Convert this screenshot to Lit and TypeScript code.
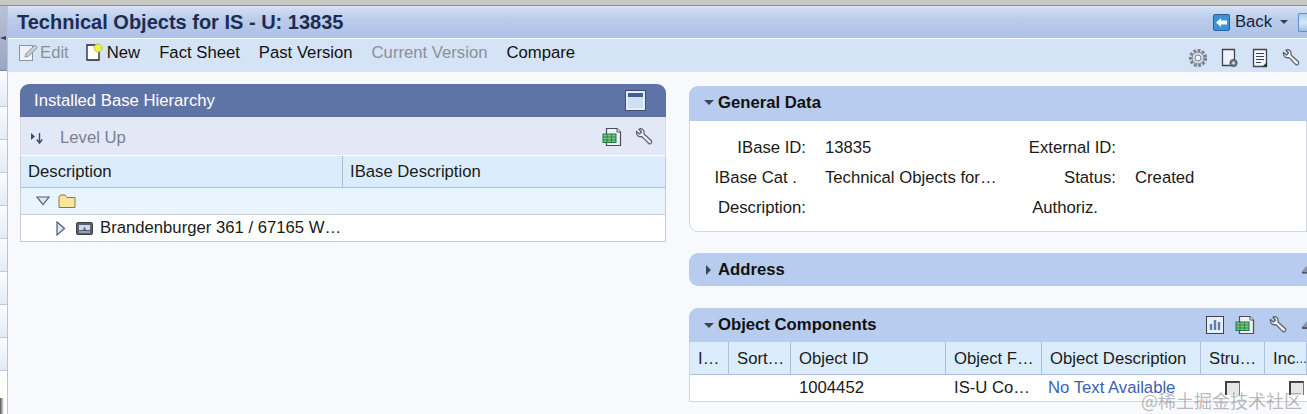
import { LitElement, html, css } from "lit";
import { customElement } from "lit/decorators.js";

const gear = html`<svg width="20" height="20" viewBox="0 0 20 20">
  <circle cx="10" cy="10" r="7.6" fill="none" stroke="#7a818d" stroke-width="3" stroke-dasharray="2.8 1.6"></circle>
  <circle cx="10" cy="10" r="6" fill="#d4dce8" stroke="#7a818d" stroke-width="1"></circle>
  <circle cx="10" cy="10" r="3" fill="#eef2f8" stroke="#7a818d" stroke-width="1"></circle>
</svg>`;

const wrench = html`<svg width="20" height="20" viewBox="0 0 20 20">
  <path d="M2.5 4.5 L5.5 7 L7.5 5 L5 2.2 C7.5 1 10.2 2.6 10 5.6 L10 7 L17.2 13.4 C18.6 15 16.8 17.8 14.6 16.4 L8 9.6 C5 10.4 1.8 8 2.5 4.5 Z" fill="#f4f6fa" stroke="#5a6370" stroke-width="1.3" stroke-linejoin="round"></path>
</svg>`;

const sheet = html`<svg width="22" height="20" viewBox="0 0 22 20">
  <path d="M4.5 1.5 H15 L18.5 5 V18.5 H4.5 Z" fill="#eef1f5" stroke="#4a4f57" stroke-width="1.2"></path>
  <path d="M15 1.5 V5 H18.5" fill="#fff" stroke="#4a4f57" stroke-width="1"></path>
  <rect x="1" y="7" width="13" height="8.5" fill="#7fc57a" stroke="#1d7a4a" stroke-width="1"></rect>
  <path d="M1 10 H14 M1 13 H14 M5 7 V15.5 M9.5 7 V15.5" stroke="#1d7a4a" stroke-width=".8"></path>
</svg>`;

const grayBox = html`<span class="check"></span>`;

@customElement("app-root")
export class AppRoot extends LitElement {
  static styles = css`
    :host {
      display: block;
      width: 1307px;
      height: 414px;
      overflow: hidden;
      position: relative;
      font-family: "Liberation Sans", Arial, sans-serif;
      font-size: 16.7px;
      color: #1a1a1a;
      background: #f7f9fd;
    }
    .top {
      height: 5px;
      background: #c8c8c4;
      border-bottom: 1px solid #8f8f8f;
    }
    .shell {
      display: flex;
      height: 408px;
    }
    .side {
      width: 7px;
      flex: none;
      border-right: 1px solid #bfc3cf;
      display: flex;
      flex-direction: column;
      position: relative;
      background: #fff;
    }
    .side .handle {
      height: 64px;
      background: linear-gradient(#b9c3d6, #9aa5c4);
      border-bottom: 1px solid #7f8796;
    }
    .side .tab {
      height: 32px;
      background: linear-gradient(#fbfcfe, #e4ebf6);
      border-bottom: 1px solid #c3c8d4;
    }
    .side .tab.first {
      height: 35px;
    }
    .side .pin {
      position: absolute;
      top: 30px;
      left: 0;
      width: 6px;
      height: 4px;
      background: #33425f;
      clip-path: polygon(0 50%, 100% 0, 100% 100%);
    }
    .side .blob {
      position: absolute;
      left: 0;
      bottom: 0;
      width: 4px;
      height: 16px;
      background: linear-gradient(90deg, #555, #fff);
    }
    .main {
      flex: 1;
      min-width: 0;
    }
    .title {
      height: 33px;
      box-sizing: border-box;
      display: flex;
      align-items: center;
      padding: 0 0 0 9px;
      background: linear-gradient(#d4e0f5, #b9cbea 45%, #aec2e6);
      border-bottom: 1px solid #fff;
    }
    .title h1 {
      margin: 0;
      font-size: 20px;
      font-weight: bold;
      color: #1c2d52;
      white-space: nowrap;
    }
    .back {
      margin-left: auto;
      display: flex;
      align-items: center;
      gap: 5px;
      color: #14233f;
      white-space: nowrap;
    }
    .back .caret {
      width: 0;
      height: 0;
      border: 4px solid transparent;
      border-top: 4px solid #37404f;
      border-bottom: 0;
      margin: 0 5px 0 3px;
    }
    .back .next {
      width: 8px;
      height: 17px;
      border-radius: 2px 0 0 2px;
      border: 1px solid #5f93c8;
      border-right: 0;
      background: linear-gradient(#a9cfee, #d8e8f7 50%, #9cc3e8);
    }
    .tools {
      height: 33px;
      box-sizing: border-box;
      display: flex;
      align-items: center;
      padding: 0 0 6px 11px;
      background: #d5e3f7;
      white-space: nowrap;
    }
    .tools .item {
      display: flex;
      align-items: center;
      margin-right: 19px;
      color: #111;
    }
    .tools .off {
      color: #8a9099;
    }
    .tools .edit {
      margin-right: 17px;
    }
    .tools .right {
      margin: 10px 0 0 auto;
      display: flex;
      gap: 11px;
      align-items: center;
      padding-right: 6px;
    }
    .content {
      display: flex;
      align-items: flex-start;
      padding: 12px 0 0 12px;
      gap: 23px;
    }
    .left {
      width: 646px;
      flex: none;
    }
    .left .head {
      height: 33px;
      box-sizing: border-box;
      display: flex;
      align-items: center;
      justify-content: space-between;
      padding: 0 21px 0 14px;
      background: #5f74a6;
      color: #fff;
      border-radius: 9px 9px 0 0;
    }
    .winbtn {
      width: 15px;
      height: 15px;
      border: 2px solid #e7edf6;
      background: linear-gradient(#3f5f9f 4px, #cfe0f6 4px);
      box-shadow: 0 0 0 1px #3e4f78;
    }
    .bar {
      height: 38px;
      box-sizing: border-box;
      display: flex;
      align-items: center;
      padding: 4px 11px 0 9px;
      background: #e3e8f7;
      border-left: 1px solid #d6dbe6;
      border-right: 1px solid #d6dbe6;
      color: #7b818b;
    }
    .bar .level {
      margin-left: 16px;
    }
    .bar .acts {
      margin: -2px 0 0 auto;
      display: flex;
      gap: 10px;
    }
    .tree {
      border: 1px solid #c7ccd6;
      border-top: 1px solid #fff;
      background: #fff;
    }
    .tree .th {
      display: grid;
      grid-template-columns: 321px 1fr;
      height: 32px;
      box-sizing: border-box;
      background: #dbedfd;
      border-bottom: 1px solid #a9c1e0;
    }
    .tree .th div {
      padding-left: 7px;
      display: flex;
      align-items: center;
    }
    .tree .th div + div {
      border-left: 1px solid #a9c1e0;
    }
    .tree .row {
      height: 27px;
      box-sizing: border-box;
      display: flex;
      align-items: center;
      border-bottom: 1px solid #c7ccd6;
    }
    .tree .folder {
      background: #e8f4fe;
      padding-left: 15px;
      gap: 8px;
    }
    .tree .leaf {
      border-bottom: 0;
      height: 26px;
      padding: 0 0 0 35px;
      white-space: nowrap;
    }
    .tree .leaf .unit {
      margin: 0 7px 0 10px;
    }
    .right-col {
      flex: 1;
      min-width: 0;
      padding-top: 2px;
    }
    .sec-head {
      display: flex;
      align-items: center;
      height: 35px;
      box-sizing: border-box;
      padding: 0 0 2px 15px;
      background: #b8ccef;
      border-radius: 9px 0 0 0;
      font-weight: bold;
      color: #111;
      white-space: nowrap;
    }
    .arrow-d {
      width: 0;
      height: 0;
      border: 5px solid transparent;
      border-top: 5px solid #3c4554;
      border-bottom: 0;
      margin-right: 4px;
    }
    .arrow-r {
      width: 0;
      height: 0;
      border: 5px solid transparent;
      border-left: 5px solid #3c4554;
      border-right: 0;
      margin: 0 7px 0 2px;
    }
    .general {
      height: 111px;
      box-sizing: border-box;
      background: #fff;
      border: 1px solid #d2d6de;
      border-top: 0;
      border-radius: 0 0 0 9px;
      padding-top: 12px;
      display: grid;
      grid-template-columns: 116px 156px 116px 1fr;
      column-gap: 19px;
      grid-auto-rows: 30px;
      align-items: center;
      white-space: nowrap;
    }
    .general .lab {
      text-align: right;
    }
    .general .cat {
      padding-right: 9px;
    }
    .general .auth {
      padding-right: 18px;
    }
    .address {
      height: 33px;
      margin-top: 21px;
      border-radius: 9px 0 0 9px;
      padding-bottom: 0;
      position: relative;
    }
    .objects {
      margin-top: 22px;
    }
    .objects .sec-head {
      height: 34px;
      padding-bottom: 0;
      position: relative;
    }
    .pad {
      margin-left: auto;
      display: flex;
      align-items: center;
      gap: 11px;
      width: 101px;
    }
    .sliver {
      position: absolute;
      right: 0;
      top: 50%;
      margin-top: -4px;
      width: 5px;
      height: 8px;
      border-bottom: 2px solid #556;
      box-sizing: border-box;
      clip-path: polygon(100% 0, 100% 100%, 0 100%, 0 70%);
      background: #8a93a3;
    }
    .grid {
      display: grid;
      grid-template-columns: 39px 62px 155px 96px 159px 64px 1fr;
      background: #fff;
      border-left: 1px solid #d2d6de;
      border-bottom: 1px solid #d2d6de;
    }
    .grid > div {
      box-sizing: border-box;
      display: flex;
      align-items: center;
      padding-left: 8px;
      white-space: nowrap;
      overflow: hidden;
    }
    .grid .h {
      height: 33px;
      padding-top: 2px;
      background: #dbedfd;
      border-bottom: 1px solid #a9c1e0;
      border-right: 1px solid #a9c1e0;
    }
    .grid .h .dots {
      font-size: 12px;
    }
    .grid .c {
      height: 26px;
    }
    .grid .link {
      color: #3a62b4;
      padding-left: 6px;
    }
    .check {
      width: 15px;
      height: 14px;
      margin-left: 16px;
      box-sizing: border-box;
      background: #e6e6e8;
      border-top: 2px solid #444;
      border-left: 2px solid #444;
      border-right: 1px solid #777;
      flex: none;
    }
    .mark {
      position: absolute;
      left: 1141px;
      top: 388px;
      font-family: "Noto Sans CJK SC", "Liberation Sans", sans-serif;
      font-size: 18px;
      line-height: 24px;
      color: rgba(120, 120, 120, 0.5);
      white-space: nowrap;
    }
  `;

  render() {
    return html`
      <div class="top"></div>
      <div class="shell">
        <div class="side">
          <div class="handle"></div>
          <div class="tab first"></div><div class="tab"></div><div class="tab"></div>
          <div class="tab"></div><div class="tab"></div><div class="tab"></div>
          <div class="tab"></div><div class="tab"></div><div class="tab"></div>
          <div class="pin"></div>
          <div class="blob"></div>
        </div>
        <div class="main">
          <div class="title">
            <h1>Technical Objects for IS - U: 13835</h1>
            <div class="back">
              <svg width="17" height="17" viewBox="0 0 17 17">
                <rect x=".5" y=".5" width="16" height="16" rx="1.5" fill="#3a92dc" stroke="#27609c"></rect>
                <path d="M3 8.5 L8 4 V6.5 H14 V10.5 H8 V13 Z" fill="#fff"></path>
              </svg>
              Back<span class="caret"></span><span class="next"></span>
            </div>
          </div>
          <div class="tools">
            <span class="item off edit">
              <svg width="21" height="20" viewBox="0 0 21 20">
                <rect x=".5" y="2.5" width="13" height="15" fill="#eef2f8" stroke="#8d939c"></rect>
                <path d="M6 14 L7 10.5 L16 2 L18.5 4.5 L9.5 13 Z" fill="#c9ced6" stroke="#8d939c"></path>
              </svg>Edit
            </span>
            <span class="item">
              <svg width="21" height="20" viewBox="0 0 21 20">
                <path d="M1 2 H13 V17 H1 Z" fill="#fff" stroke="#222" stroke-width="1.3"></path>
                <circle cx="12" cy="5" r="4" fill="#eef04a" stroke="#b7a92a" stroke-dasharray="1.5 1"></circle>
              </svg>New
            </span>
            <span class="item">Fact Sheet</span>
            <span class="item">Past Version</span>
            <span class="item off">Current Version</span>
            <span class="item">Compare</span>
            <span class="right">
              ${gear}
              <svg width="20" height="20" viewBox="0 0 20 20">
                <path d="M3.5 1.5 H15.5 V17.5 H3.5 Z" fill="#eef2f8" stroke="#3e4552" stroke-width="1.3"></path>
                <circle cx="14.5" cy="15" r="3.6" fill="#7a808c" stroke="#4b505a"></circle>
                <circle cx="14.5" cy="15" r="1.3" fill="#e4e8ee"></circle>
              </svg>
              <svg width="20" height="20" viewBox="0 0 20 20">
                <path d="M3.5 1.5 H16.5 V18.5 H3.5 Z" fill="#f3f5f9" stroke="#3e4552" stroke-width="1.3"></path>
                <path d="M6 5.5 H14 M6 8.5 H14 M6 11.5 H14 M6 14.5 H11" stroke="#3e4552" stroke-width="1.2"></path>
                <path d="M17 14 V19 H12 Z" fill="#333"></path>
              </svg>
              ${wrench}
            </span>
          </div>
          <div class="content">
            <section class="left">
              <div class="head">Installed Base Hierarchy <span class="winbtn"></span></div>
              <div class="bar">
                <svg width="14" height="14" viewBox="0 0 14 14">
                  <path d="M1 2 L5 5.5 L1 9 Z" fill="#3f4e68"></path>
                  <path d="M9.5 2 V11 M6.8 8.5 L9.5 12 L12.2 8.5" fill="none" stroke="#3f4e68" stroke-width="1.4"></path>
                </svg>
                <span class="level">Level Up</span>
                <span class="acts">${sheet}${wrench}</span>
              </div>
              <div class="tree">
                <div class="th"><div>Description</div><div>IBase Description</div></div>
                <div class="row folder">
                  <svg width="14" height="10" viewBox="0 0 14 10">
                    <path d="M1 1 H13 L7 8.5 Z" fill="#dfe6f2" stroke="#4f5d78" stroke-width="1.2"></path>
                  </svg>
                  <svg width="18" height="15" viewBox="0 0 18 15">
                    <path d="M1 13.5 V3 L2.5 1 H7 L9 3.5 H17 V13.5 Z" fill="#f8e79a" stroke="#8a7a3a"></path>
                  </svg>
                </div>
                <div class="row leaf">
                  <svg width="10" height="15" viewBox="0 0 10 15">
                    <path d="M1 1 L8.5 7.5 L1 14 Z" fill="#dfe6f2" stroke="#4f5d78" stroke-width="1.2"></path>
                  </svg>
                  <svg class="unit" width="17" height="15" viewBox="0 0 17 15">
                    <rect x=".5" y="1.5" width="16" height="12" rx="1.5" fill="#5a6270" stroke="#3a404a"></rect>
                    <rect x="3" y="4" width="11" height="5" fill="#cbdcf0"></rect>
                    <path d="M7 9 L8.5 5.5 L10 9 Z" fill="#5a6270"></path>
                    <path d="M3 11 H14" stroke="#d8dde4"></path>
                  </svg>
                  Brandenburger 361 / 67165 W…
                </div>
              </div>
            </section>
            <section class="right-col">
              <div class="sec-head"><span class="arrow-d"></span>General Data</div>
              <div class="general">
                <div class="lab">IBase ID:</div><div>13835</div>
                <div class="lab">External ID:</div><div></div>
                <div class="lab cat">IBase Cat .</div><div>Technical Objects for…</div>
                <div class="lab">Status:</div><div>Created</div>
                <div class="lab">Description:</div><div></div>
                <div class="lab auth">Authoriz.</div><div></div>
              </div>
              <div class="sec-head address"><span class="arrow-r"></span>Address<span class="sliver"></span></div>
              <div class="objects">
                <div class="sec-head">
                  <span class="arrow-d"></span>Object Components
                  <span class="pad">
                    <svg width="18" height="18" viewBox="0 0 18 18">
                      <rect x=".5" y=".5" width="17" height="17" fill="#e9eff8" stroke="#3e4552"></rect>
                      <path d="M5 14 V8 M9 14 V4 M13 14 V6" stroke="#5a7fb4" stroke-width="2.4"></path>
                    </svg>
                    ${sheet}${wrench}
                  </span>
                  <span class="sliver"></span>
                </div>
                <div class="grid">
                  <div class="h">I…</div>
                  <div class="h">Sort…</div>
                  <div class="h">Object ID</div>
                  <div class="h">Object F…</div>
                  <div class="h">Object Description</div>
                  <div class="h">Stru…</div>
                  <div class="h">Inc<span class="dots">…</span></div>
                  <div class="c"></div>
                  <div class="c"></div>
                  <div class="c">1004452</div>
                  <div class="c">IS-U Co…</div>
                  <div class="c link">No Text Available</div>
                  <div class="c">${grayBox}</div>
                  <div class="c">${grayBox}</div>
                </div>
              </div>
            </section>
          </div>
        </div>
      </div>
      <div class="mark">@稀土掘金技术社区</div>
    `;
  }
}
